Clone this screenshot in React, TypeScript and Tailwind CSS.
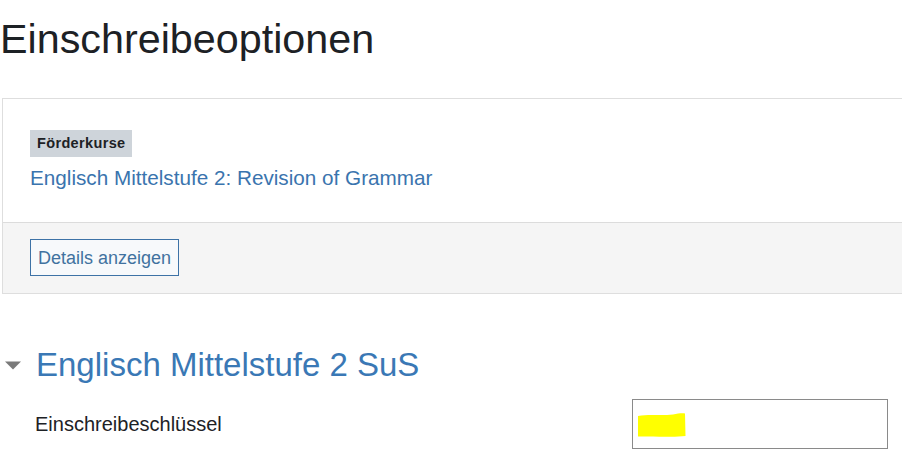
import { ChevronDown } from 'lucide-react';

const font = { fontFamily: '"Liberation Sans", Arial, sans-serif' };

export default function App() {
  return (
    <div className="min-h-screen bg-white text-[#1d2125] pl-[2px]" style={font}>
      <h1 className="mt-[15px] -ml-[2px] text-[41.3px] leading-[48px] font-normal text-[#1d2125]">
        Einschreibeoptionen
      </h1>

      <section className="mt-[35px] border-l border-t border-b border-[#dedede]">
        <div className="pt-[31px] pb-[30px] pl-[27px]">
          <span className="inline-block bg-[#ced4da] px-[7px] py-[5px] text-[14.5px] leading-[17px] font-bold tracking-[0.35px] text-[#1d2125]">
            Förderkurse
          </span>
          <div className="mt-[8px]">
            <a href="#" className="text-[20.7px] leading-[25px] text-[#3a74ae]">
              Englisch Mittelstufe 2: Revision of Grammar
            </a>
          </div>
        </div>
        <div className="border-t border-[#dcdcdc] bg-[#f5f5f5] pt-[16px] pb-[17px] pl-[27px]">
          <button className="h-[37px] border border-[#3d72a6] bg-[#f7f9fb] px-[7px] text-[18px] leading-[22px] text-[#41729f]">
            Details anzeigen
          </button>
        </div>
      </section>

      <div className="mt-[51px] flex items-center -ml-[2px]">
        <svg width="16" height="9" viewBox="0 0 16 9" className="ml-[5px] mr-[15px]">
          <path d="M0 0.5 H16 L8 8.5 Z" fill="#7a7a7a" />
        </svg>
        <h3 className="text-[33px] leading-[40px] font-normal text-[#3a78b5]">
          Englisch Mittelstufe 2 SuS
        </h3>
      </div>

      <div className="mt-[14px] flex items-center -ml-[2px]">
        <label className="w-[632px] pl-[35px] text-[20px] leading-[24px] text-[#1d2125]">
          Einschreibeschlüssel
        </label>
        <div className="relative h-[50px] w-[256px] border border-[#8a8a8a] bg-white">
          <svg width="50" height="26" viewBox="0 0 50 26" className="absolute left-[4px] top-[13px]">
            <path d="M1 3 C12 1 24 3 36 1.5 C41 0.5 45 0 48 0.5 L48.5 23 C36 24.5 20 23 1 23.5 Z" fill="#ffff00" />
          </svg>
        </div>
      </div>
      <span className="hidden"><ChevronDown size={1} /></span>
    </div>
  );
}
